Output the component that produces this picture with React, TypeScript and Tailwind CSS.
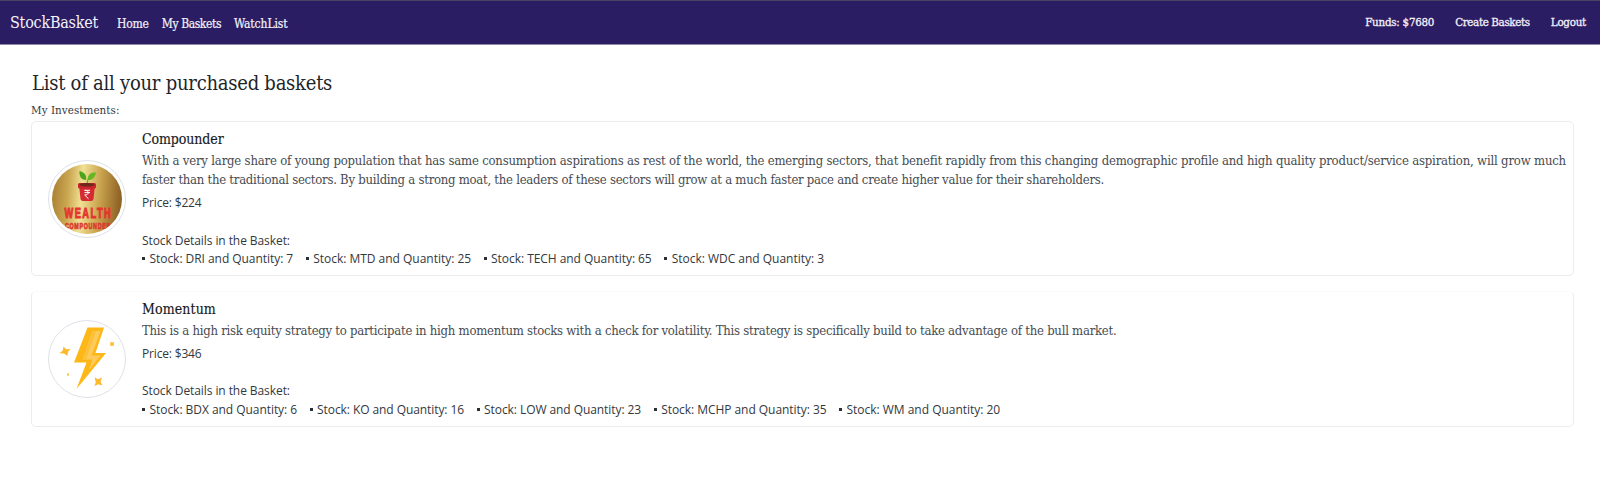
import type { ReactNode } from "react";

const serif = "font-['DejaVu_Serif_Condensed','DejaVu_Serif',serif]";
const sans = "font-['Open_Sans','Noto_Sans',sans-serif]";

function WealthLogo() {
  return (
    <svg viewBox="0 0 70 70" className="size-[70px] rounded-full">
      <defs>
        <linearGradient id="gold" x1="0" y1="0" x2="1" y2="0.08">
          <stop offset="0" stopColor="#a67a31" />
          <stop offset="0.25" stopColor="#c9a650" />
          <stop offset="0.45" stopColor="#f0e093" />
          <stop offset="0.72" stopColor="#c8a14d" />
          <stop offset="1" stopColor="#8f6426" />
        </linearGradient>
      </defs>
      <rect width="70" height="70" fill="url(#gold)" />
      <path d="M35 21C35 16 37 14 39 12" stroke="#4d9a1c" strokeWidth="1" fill="none" />
      <path d="M34 16C29 16 27 12 27.500 7C32 8 35 11 34 16Z" fill="#4da51c" />
      <path d="M35.500 16C36 10 39 8 44 8.500C43 14 40 16.500 35.500 16Z" fill="#65b820" />
      <path d="M27 21H43L41.500 35Q41.200 37 39 37H31Q28.800 37 28.500 35Z" fill="#d52a31" />
      <rect x="26" y="19" width="18" height="5.500" rx="1.500" fill="#c9252d" />
      <ellipse cx="35" cy="20.800" rx="7.500" ry="1.800" fill="#70281d" />
      <path d="M32.500 26.300H38M32.500 28.600H38M32.500 26.300C37.500 26.300 37.500 31 32.700 31L36.500 34.800" stroke="#fff" strokeWidth="1" fill="none" />
      <text transform="translate(12.500 53.700) scale(0.66 1)" textLength="70" fontFamily="Liberation Sans, sans-serif" fontWeight="700" fontSize="14" fill="#e5352f" stroke="#e5352f" strokeWidth="1">WEALTH</text>
      <text transform="translate(13 64.500) scale(0.62 1)" textLength="73" fontFamily="Liberation Sans, sans-serif" fontWeight="700" fontSize="8.500" fill="#dc3a2e" stroke="#dc3a2e" strokeWidth="0.7">COMPOUNDER</text>
    </svg>
  );
}

function BoltLogo() {
  return (
    <svg viewBox="0 0 70 70" className="size-[70px]">
      <path d="M35.500 3.500H52L43.500 29H54L24.500 65L34.500 38.500H22Z" fill="#fdb817" />
      <path d="M40.500 7H48.500L39.500 31.500H48.500L37 46L40.500 35.500H30.500Z" fill="#fecb5a" />
      <path d="M40.500 7L30.500 35.500H34L44 7Z" fill="#fdc03a" />
      <path d="M11.500 22.500L14.200 25.200L18.500 25L15.800 28L15.500 32L12 29.500L7.500 29.300L10.800 26.600Z" fill="#fdb92a" />
      <path d="M42.500 53.500L46 55.200L50 53.500L48.500 57.500L50.300 61.500L46.300 60.300L42.500 62L43.800 58Z" fill="#fdb92a" />
      <path d="M58 18L60 18.500L62 18L61.600 20L62 22L60 21.500L58 22L58.500 20Z" fill="#fdb92a" />
      <path d="M15 49.500L16.800 49.200L17.200 51.500L15 51.800Z" fill="#fdc24a" />
    </svg>
  );
}

type Stock = { symbol: string; quantity: number; tracking: string };

type BasketProps = {
  title: string;
  titleClass: string;
  price: number;
  logo: ReactNode;
  className: string;
  stocks: Stock[];
  children: ReactNode;
};

function Basket({ title, titleClass, price, logo, className, stocks, children }: BasketProps) {
  return (
    <article className={`flex items-center rounded-[5px] border border-[#ececec] bg-white pl-4 ${className}`}>
      <div className="mb-px flex size-[78px] shrink-0 items-center justify-center rounded-full border border-[#dee2e8] bg-white">
        {logo}
      </div>
      <div className={`ml-4 whitespace-nowrap text-[12px] leading-[18.7px] text-[#33383e] ${sans}`}>
        <h2 className={`text-[14px] leading-[22px] text-[#16191d] [-webkit-text-stroke:0.15px] ${serif} ${titleClass}`}>{title}</h2>
        <div className={`mt-[1px] text-[13px] leading-[19px] text-[#474c52] ${serif}`}>{children}</div>
        <p className="mt-[5px] tracking-[-0.17px]">Price: ${price}</p>
        <p className="mt-[18.400px] tracking-[-0.08px]">Stock Details in the Basket:</p>
        <ul className="flex gap-[12.500px] pb-[0.600px]">
          {stocks.map((s) => (
            <li key={s.symbol} className={`flex items-center gap-[4.500px] ${s.tracking}`}>
              <span className="mb-[1.500px] size-[3px] bg-[#2b3036]" />
              Stock: {s.symbol} and Quantity: {s.quantity}
            </li>
          ))}
        </ul>
      </div>
    </article>
  );
}

export default function App() {
  return (
    <div className={`h-[498px] overflow-hidden bg-white ${serif}`}>
      <nav className="flex h-[45px] items-center whitespace-nowrap border-y border-t-[#4a4462] border-b-[#8f8ba6] bg-[#2b1d63] pl-[10px] pr-[14px] text-[#f3f1fa]">
        <a className="pt-[1px] text-[16px] leading-6 tracking-[-0.24px]">StockBasket</a>
        <div className="ml-[19px] flex gap-[13px] pt-[2px] text-[12px] leading-5 [-webkit-text-stroke:0.2px]">
          <a className="tracking-[-0.2px]">Home</a>
          <a className="tracking-[-0.4px]">My Baskets</a>
          <a className="tracking-[-0.1px]">WatchList</a>
        </div>
        <div className="ml-auto flex gap-[21px] pb-[1px] text-[11.500px] leading-5 [-webkit-text-stroke:0.3px]">
          <a className="tracking-[-0.26px]">Funds: $7680</a>
          <a className="tracking-[-0.36px]">Create Baskets</a>
          <a className="tracking-[-0.26px]">Logout</a>
        </div>
      </nav>
      <main className="px-[31px] pt-[23px] text-[#212529]">
        <h1 className="pl-px text-[20px] leading-[30px] tracking-[-0.25px]">List of all your purchased baskets</h1>
        <p className="mt-[3px] text-[11.500px] leading-[18px] tracking-[0.07px] text-[#33383e]">My Investments:</p>
        <section className="mt-[2px] flex w-[1543px] flex-col gap-[15px]">
          <Basket
            title="Compounder"
            titleClass="tracking-[-0.1px]"
            price={224}
            logo={<WealthLogo />}
            className="h-[155px] pt-px"
            stocks={[
              { symbol: "DRI", quantity: 7, tracking: "tracking-[-0.05px]" },
              { symbol: "MTD", quantity: 25, tracking: "tracking-[-0.02px]" },
              { symbol: "TECH", quantity: 65, tracking: "tracking-[-0.05px]" },
              { symbol: "WDC", quantity: 3, tracking: "tracking-[-0.02px]" },
            ]}
          >
            <p className="tracking-[-0.191px]">
              With a very large share of young population that has same consumption aspirations as rest of the world, the emerging sectors, that benefit rapidly from this changing demographic profile and high quality product/service aspiration, will grow much
            </p>
            <p className="tracking-[-0.26px]">
              faster than the traditional sectors. By building a strong moat, the leaders of these sectors will grow at a much faster pace and create higher value for their shareholders.
            </p>
          </Basket>
          <Basket
            title="Momentum"
            titleClass="tracking-[0.1px]"
            price={346}
            logo={<BoltLogo />}
            className="h-[136px] border-t-[#fafafa]"
            stocks={[
              { symbol: "BDX", quantity: 6, tracking: "tracking-[-0.05px]" },
              { symbol: "KO", quantity: 16, tracking: "tracking-[-0.08px]" },
              { symbol: "LOW", quantity: 23, tracking: "tracking-[-0.07px]" },
              { symbol: "MCHP", quantity: 35, tracking: "tracking-[-0.05px]" },
              { symbol: "WM", quantity: 20, tracking: "tracking-[-0.02px]" },
            ]}
          >
            <p className="tracking-[-0.252px]">
              This is a high risk equity strategy to participate in high momentum stocks with a check for volatility. This strategy is specifically build to take advantage of the bull market.
            </p>
          </Basket>
        </section>
      </main>
    </div>
  );
}
